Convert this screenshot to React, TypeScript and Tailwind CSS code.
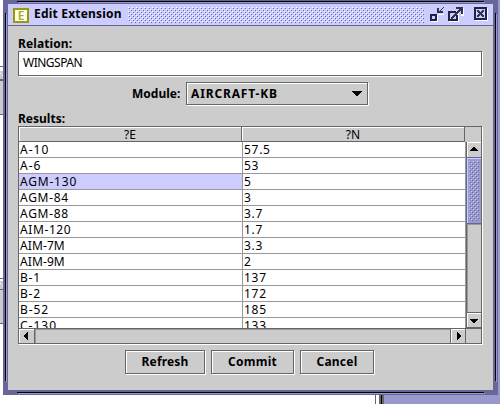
import React from "react";

type Cell = { text: string; tracking: string };

const rows: [Cell, Cell][] = [
  [{ text: "A-10", tracking: "tracking-[1px]" }, { text: "57.5", tracking: "tracking-[0.7px]" }],
  [{ text: "A-6", tracking: "tracking-[1px]" }, { text: "53", tracking: "tracking-[0.7px]" }],
  [{ text: "AGM-130", tracking: "tracking-[0.8px]" }, { text: "5", tracking: "tracking-[0.7px]" }],
  [{ text: "AGM-84", tracking: "tracking-[0.7px]" }, { text: "3", tracking: "tracking-[0.7px]" }],
  [{ text: "AGM-88", tracking: "tracking-[0.7px]" }, { text: "3.7", tracking: "tracking-[0.7px]" }],
  [{ text: "AIM-120", tracking: "tracking-[0.6px]" }, { text: "1.7", tracking: "tracking-[0.7px]" }],
  [{ text: "AIM-7M", tracking: "tracking-[0.1px]" }, { text: "3.3", tracking: "tracking-[0.7px]" }],
  [{ text: "AIM-9M", tracking: "tracking-[0.1px]" }, { text: "2", tracking: "tracking-[0.7px]" }],
  [{ text: "B-1", tracking: "tracking-[0.8px]" }, { text: "137", tracking: "tracking-[0.7px]" }],
  [{ text: "B-2", tracking: "tracking-[0.8px]" }, { text: "172", tracking: "tracking-[0.7px]" }],
  [{ text: "B-52", tracking: "tracking-[0.9px]" }, { text: "185", tracking: "tracking-[0.7px]" }],
  [{ text: "C-130", tracking: "tracking-[1px]" }, { text: "133", tracking: "tracking-[0.7px]" }],
];

const etched =
  "border border-[#666666] shadow-[1px_1px_0_#fff,inset_1px_1px_0_#fff] bg-[#cccccc]";

function Dots({ id, w, h, light, className }: { id: string; w: number; h: number; light: string; className?: string }) {
  return (
    <svg width={w} height={h} className={className} shapeRendering="crispEdges">
      <defs>
        <pattern id={id} width="4" height="4" patternUnits="userSpaceOnUse">
          <path d="M0 0h1v1h-1zM2 2h1v1h-1z" fill={light} />
          <path d="M1 1h1v1h-1zM3 3h1v1h-1z" fill="#666699" />
        </pattern>
      </defs>
      <rect width={w} height={h} fill={`url(#${id})`} />
    </svg>
  );
}

function WindowButtons() {
  return (
    <svg width="59" height="17" viewBox="0 0 59 17" className="mt-[3px] ml-[6px]" shapeRendering="crispEdges">
      {/* iconify */}
      <path d="M1 8h7v7H1zM8 7h6v1H8z" fill="#fff" />
      <path d="M0 7h7v7H0z" fill="#222244" />
      <path d="M2 9h3v3H2z" fill="#ccccff" />
      <path d="M7 1h2v3h1V3h1V2h1V1h1V0h1v1h-1v1h-1v1h-1v1h2v2H7z" fill="#333355" />
      {/* maximize */}
      <path d="M19 5h10v10H19zM31 7h2V1h1v8h-3z" fill="#fff" />
      <path d="M18 4h8v2h-6v6h6v-4h2v6H18z" fill="#222244" />
      <path d="M20 6h6v6h-6z" fill="#ccccff" />
      <path d="M21 10h1V9h1V8h1V7h1V6h1V5h1V4h1V3h1V2h-3V0h7v7h-2V4h-1v1h-1v1h-1v1h-1v1h-1v1h-1v1h-1v1h-1v1h-2z" fill="#333355" />
      {/* close */}
      <path d="M45 1h13v13H45z" fill="#fff" />
      <path d="M44 0h13v13H44z" fill="#222244" />
      <path d="M46 2h9v9h-9z" fill="#ccccff" />
      <path d="M47 3h2v1h1v1h1v-1h1V3h2v2h-1v1h-1v1h1v1h1v2h-2V9h-1V8h-1v1h-1v1h-2V8h1V7h1V6h-1V5h-1z" fill="#333355" />
    </svg>
  );
}

function TitleBar() {
  return (
    <div className="flex h-[22px] shrink-0 items-start border-b border-[#666699] bg-[#ccccff]">
      <div className="mt-[4px] ml-[5px] flex h-[15px] w-4 items-center justify-center border-2 border-[#999900] bg-[#ffffee]">
        <span className="text-[12px] leading-[11px] font-semibold text-[#aaaa33]">E</span>
      </div>
      <span className="mt-[1px] ml-[5px] w-[94px] text-[12px] leading-[18px] font-bold tracking-[0.2px] whitespace-nowrap">Edit Extension</span>
      <Dots id="title" w={296} h={16} light="#fff" className="mt-[3px]" />
      <WindowButtons />
    </div>
  );
}

function Arrow({ d, w, h, className }: { d: string; w: number; h: number; className?: string }) {
  return (
    <svg width={w} height={h} className={className} shapeRendering="crispEdges"><path d={d} /></svg>
  );
}

function Table() {
  return (
    <div className="ml-[10px] flex h-[218px] w-[464px] shrink-0 flex-col border border-[#666666] bg-[#cccccc] shadow-[1px_1px_0_#fff]">
      <div className="flex h-[201px] overflow-hidden">
        <div className="w-[447px]">
          <div className="flex h-[15px] text-center text-[12px] leading-[15px]">
            <div className="w-[223px] border-r border-b border-[#666666] shadow-[inset_1px_1px_0_#fff]">?E</div>
            <div className="w-[223px] border-r border-b border-[#666666] shadow-[inset_1px_1px_0_#fff]">?N</div>
          </div>
          {rows.map(([name, value]) => (
            <div key={name.text} className="flex h-4 text-[12px] leading-[15px]">
              <div className={`w-[224px] border-r border-b border-[#999999] pl-[1px] ${name.tracking} ${name.text === "AGM-130" ? "bg-[#ccccff]" : "bg-white"}`}>{name.text}</div>
              <div className={`w-[223px] border-r border-b border-[#999999] bg-white pl-[1px] ${value.tracking}`}>{value.text}</div>
            </div>
          ))}
        </div>
        <div className="mt-[15px] flex w-[15px] flex-col">
          <div className="h-[15px] border-l border-[#666666] pt-[5px] pl-[3px] shadow-[inset_1px_1px_0_#fff]">
            <Arrow w={8} h={4} d="M3 0h2v1h1v1h1v1h1v1H0V3h1V2h1V1h1z" />
          </div>
          <div className="flex h-[67px] justify-center border border-r-0 border-[#666699] bg-[#9999cc] pt-[3px] shadow-[inset_1px_1px_0_#ccccff]">
            <Dots id="thumb" w={10} h={60} light="#ccccff" />
          </div>
          <div className="flex-1 border-l border-[#666666] shadow-[inset_1px_1px_0_#999]" />
          <div className="h-4 border-t border-b border-l border-[#666666] pt-[6px] pl-[3px] shadow-[inset_1px_1px_0_#fff]">
            <Arrow w={8} h={4} d="M0 0h8v1H7v1H6v1H5v1H3V3H2V2H1V1H0z" />
          </div>
        </div>
      </div>
      <div className="flex h-[15px] border-t border-[#666666]">
        <div className="w-4 border-r border-[#666666] pt-[3px] pl-[5px] shadow-[inset_1px_1px_0_#fff]">
          <Arrow w={4} h={8} d="M4 0v8H3V7H2V6H1V5H0V3h1V2h1V1h1V0z" />
        </div>
        <div className="w-[416px] border-r border-[#666666] shadow-[inset_1px_1px_0_#999]" />
        <div className="w-[15px] border-r border-[#666666] pt-[3px] pl-[6px] shadow-[inset_1px_1px_0_#fff]">
          <Arrow w={4} h={8} d="M0 0v8h1V7h1V6h1V5h1V3H3V2H2V1H1V0z" />
        </div>
      </div>
    </div>
  );
}

function Backdrop() {
  return (
    <svg width="500" height="404" className="absolute inset-0" shapeRendering="crispEdges">
      <rect width="500" height="404" fill="#fff" />
      <path d="M0 66h3v1H0zM0 79h3v2H0zM0 114h3v1H0zM0 278h3v1H0zM0 289h3v1H0zM0 323h3v1H0z" fill="#666" />
      <path d="M0 71h3v8H0zM0 81h3v33H0zM0 281h3v8H0zM0 290h3v33H0z" fill="#ccc" />
      <path d="M0 73h1v1H0zM2 75h1v1H2zM0 283h1v1H0zM2 285h1v1H2z" fill="#fff" />
      <path d="M384 390h116v14H384zM498 0h2v404h-2z" fill="#9999cc" />
      <path d="M375 395h1v9h-1zM379 395h2v9h-2zM382 395h2v9h-2z" fill="#666" />
      <path d="M381 395h1v9h-1z" />
    </svg>
  );
}

function Frame() {
  return (
    <svg width="500" height="404" className="absolute inset-0" shapeRendering="crispEdges">
      <path d="M3 0h495v395H3z" fill="#666699" />
      <path d="M18 2h467v1H18zM6 14h1v368H6zM496 14h1v368h-1zM18 393h467v1H18z" fill="#9999cc" />
      <path d="M17 1h467v1H17zM5 13h1v368H5zM495 13h1v368h-1zM17 392h467v1H17z" />
    </svg>
  );
}

export default function App() {
  return (
    <div className="relative h-[404px] w-[500px] overflow-hidden font-['Noto_Sans','DejaVu_Sans',sans-serif] text-black">
      <Backdrop />
      <Frame />
      <main className="relative top-1 left-2 flex h-[386px] w-[485px] flex-col bg-[#cccccc]">
        <TitleBar />
        <label className="mt-[10px] ml-[10px] h-[15px] text-[12px] leading-[15px] font-bold tracking-[0.1px]">Relation:</label>
        <div className="ml-[10px] h-[25px] w-[464px] border border-[#666666] bg-white pl-[4px] text-[12px] leading-[22px] tracking-[-0.5px] shadow-[1px_1px_0_#fff]">WINGSPAN</div>
        <div className="mt-[6px] ml-[124px] flex h-[23px] items-center">
          <span className="w-[54px] text-[12px] font-bold">Module:</span>
          <div className={`flex h-[23px] w-[182px] items-center justify-between pr-[5px] pl-[4px] text-[12px] font-bold tracking-[0.85px] ${etched}`}>
            AIRCRAFT-KB
            <svg width="10" height="5" shapeRendering="crispEdges"><path d="M0 0h10v1H9v1H8v1H7v1H6v1H4V4H3V3H2V2H1V1H0z" /></svg>
          </div>
        </div>
        <div className="mt-[6px] ml-[10px] h-[15px] text-[12px] leading-[15px] font-bold">Results:</div>
        <Table />
        <div className="mt-[6px] ml-[117px] flex gap-[6px] text-[12px] font-bold">
          <button className={`h-6 w-20 tracking-[0.15px] ${etched}`}>Refresh</button>
          <button className={`h-6 w-[83px] tracking-[0.3px] ${etched}`}>Commit</button>
          <button className={`h-6 w-[74px] tracking-[0.2px] ${etched}`}>Cancel</button>
        </div>
      </main>
    </div>
  );
}
